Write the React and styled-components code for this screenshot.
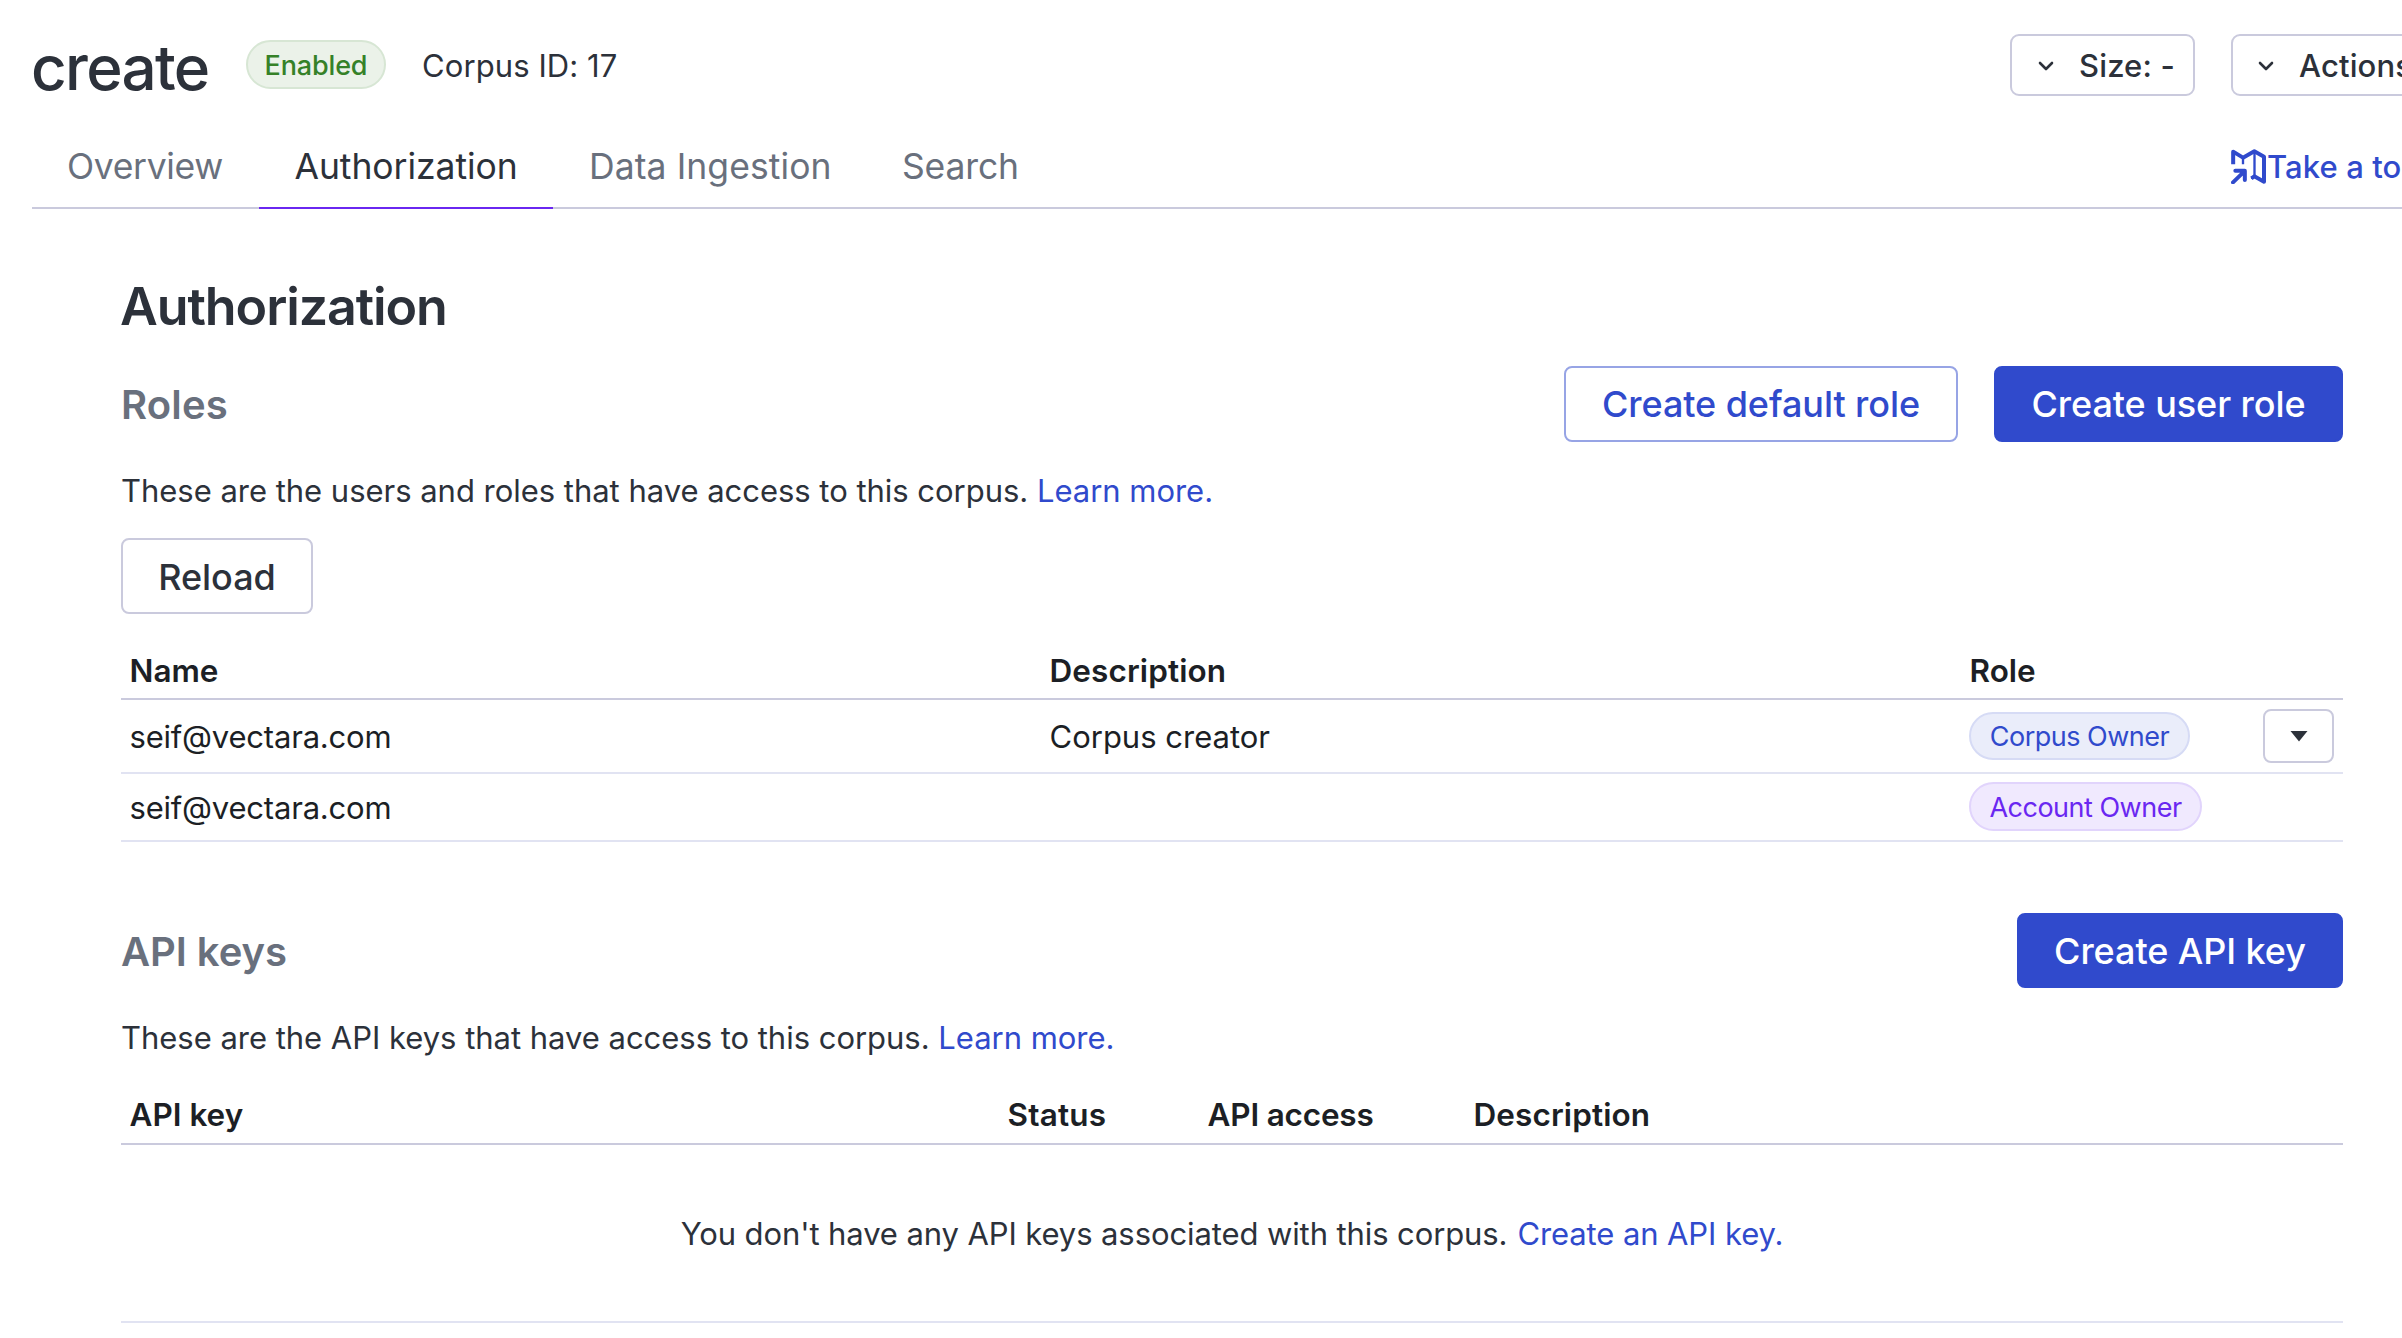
import React from 'react';
import styled, { createGlobalStyle, css } from 'styled-components';

const color = {
  text: '#2c313a',
  dark: '#1c1f25',
  subdued: '#69707d',
  primary: '#304acc',
  accent: '#6a27f1',
  success: '#358128',
  border: '#cacadd',
  rowLine: '#e1e3f2',
};

const GlobalStyle = createGlobalStyle`
  *, *::before, *::after { box-sizing: border-box; }
  html, body { margin: 0; padding: 0; background: #fff; overflow: hidden; }
  body {
    font-family: Inter, "Liberation Sans", sans-serif;
    font-size: 31px;
    font-weight: 420;
    color: ${color.text};
  }
  button { font-family: inherit; cursor: pointer; }
  svg { flex-shrink: 0; }
`;

const Viewport = styled.div`
  width: 100vw;
  height: 100vh;
  overflow: hidden;
  background: #fff;
`;

const Page = styled.main`
  width: 2464px;
  padding: 34px 32px 0;
`;

const Header = styled.header`
  display: flex;
  align-items: flex-start;
  height: 62px;
`;

const Title = styled.h1`
  width: 190px;
  margin: 0 24px 0 0;
  text-indent: -1px;
  font-size: 62px;
  font-weight: 460;
  line-height: 67px;
  letter-spacing: -1.7px;
  white-space: nowrap;
`;

const badgeTone = {
  success: css`
    color: ${color.success};
    background: #ebf2e9;
    border-color: #d7e6d4;
  `,
  primary: css`
    color: ${color.primary};
    background: #eaedfa;
    border-color: #d6dbf5;
  `,
  accent: css`
    color: ${color.accent};
    background: #f0e9fe;
    border-color: #e1d4fc;
  `,
};

const Badge = styled.span`
  display: flex;
  justify-content: center;
  width: ${(p) => p.$width}px;
  height: ${(p) => p.$height}px;
  border: 2px solid;
  border-radius: 25px;
  font-size: 27px;
  font-weight: ${(p) => p.$weight || 440};
  line-height: ${(p) => (p.$height % 2 ? p.$height - 2 : p.$height - 3)}px;
  letter-spacing: ${(p) => p.$tracking || 0}px;
  white-space: nowrap;
  ${(p) => badgeTone[p.$tone]}
`;

const StatusSlot = styled.div`
  padding-top: 6px;
`;

const CorpusId = styled.div`
  margin-left: 36px;
  line-height: 63px;
  letter-spacing: 0.09px;
`;

const HeaderActions = styled.div`
  display: flex;
  gap: 36px;
  margin-left: auto;
`;

const MenuButton = styled.button`
  display: flex;
  align-items: center;
  gap: 19px;
  width: ${(p) => p.$width}px;
  height: 62px;
  padding: 1px 0 0 ${(p) => p.$inset}px;
  border: 2px solid ${color.border};
  border-radius: 9px;
  background: #fff;
  color: ${color.text};
  font-size: 31px;
  font-weight: 500;
  letter-spacing: 0.15px;
  white-space: nowrap;
`;

const Tabs = styled.nav`
  display: flex;
  height: 84px;
  margin-top: 29px;
  border-bottom: 2px solid ${color.border};
`;

const Tab = styled.a`
  width: ${(p) => p.$width}px;
  height: 84px;
  padding-left: ${(p) => p.$inset || 36}px;
  border-bottom: 2px solid ${(p) => (p.$active ? color.accent : 'transparent')};
  color: ${(p) => (p.$active ? color.text : color.subdued)};
  font-size: 35.5px;
  line-height: 84px;
  letter-spacing: ${(p) => p.$tracking}px;
  white-space: nowrap;
`;

const TourLink = styled.a`
  display: flex;
  align-items: center;
  gap: 1px;
  width: 201px;
  height: 83px;
  margin-left: auto;
  color: ${color.primary};
  font-size: 31px;
  font-weight: 520;
  letter-spacing: 0.1px;
  white-space: nowrap;
`;

const Content = styled.div`
  width: 2222px;
  margin: 0 89px;
  padding-top: 65px;
`;

const PageTitle = styled.h2`
  margin: 0 0 26px;
  text-indent: -1px;
  font-size: 52px;
  font-weight: 620;
  line-height: 66px;
  letter-spacing: -1.1px;
`;

const SectionHead = styled.div`
  display: flex;
  align-items: center;
  justify-content: space-between;
  height: ${(p) => p.$height}px;
`;

const SectionTitle = styled.h3`
  margin: 0;
  padding-top: 2px;
  color: ${color.subdued};
  font-size: 40px;
  font-weight: 620;
  line-height: 48px;
  letter-spacing: ${(p) => p.$tracking || 0}px;
`;

const ButtonGroup = styled.div`
  display: flex;
  gap: 36px;
`;

const buttonKind = {
  filled: css`
    background: ${color.primary};
    border-color: ${color.primary};
    color: #fff;
  `,
  outline: css`
    background: #fff;
    border-color: #97a4e5;
    color: ${color.primary};
  `,
  neutral: css`
    padding-top: 2px;
    background: #fff;
    border-color: ${color.border};
    color: ${color.text};
  `,
};

const Button = styled.button`
  display: flex;
  align-items: center;
  justify-content: center;
  width: ${(p) => p.$width}px;
  height: ${(p) => p.$height || 76}px;
  padding: 0;
  border: 2px solid;
  border-radius: 8px;
  font-size: 36px;
  font-weight: 500;
  letter-spacing: -0.07px;
  white-space: nowrap;
  ${(p) => buttonKind[p.$kind]}
`;

const Paragraph = styled.p`
  margin: ${(p) => p.$before}px 0 ${(p) => p.$after}px;
  line-height: 48px;
  letter-spacing: -0.025px;
`;

const Link = styled.a`
  color: ${color.primary};
`;

const Table = styled.div`
  margin-top: ${(p) => p.$before || 0}px;
`;

const Row = styled.div`
  display: grid;
  grid-template-columns: ${(p) => p.$columns};
  align-items: center;
  height: ${(p) => p.$height}px;
  border-bottom: 2px solid ${color.rowLine};
  color: ${color.dark};
`;

const HeadRow = styled(Row)`
  border-bottom-color: ${color.border};
  font-size: 31.5px;
  font-weight: 620;
`;

const Cell = styled.div`
  padding: 0 8.5px;
  letter-spacing: ${(p) => p.$tracking || 0}px;
  white-space: nowrap;
`;

const RoleCell = styled(Cell)`
  display: flex;
  align-items: center;
  justify-content: space-between;
  padding-left: 8px;
  padding-right: 9px;
  padding-bottom: ${(p) => p.$lift || 0}px;
`;

const SelectButton = styled.button`
  display: flex;
  align-items: center;
  justify-content: center;
  width: 71px;
  height: 54px;
  padding: 0;
  border: 2px solid ${color.border};
  border-radius: 8px;
  background: #fff;
`;

const ApiSection = styled.section`
  margin-top: 71px;
`;

const EmptyState = styled.div`
  display: flex;
  align-items: center;
  justify-content: center;
  gap: 10px;
  height: 178px;
  padding-top: 1px;
  border-bottom: 2px solid ${color.rowLine};
  letter-spacing: -0.1px;
`;

const Chevron = () => (
  <svg width="28" height="28" viewBox="0 0 28 28" fill="none" stroke={color.text} strokeWidth="2.6" strokeLinecap="round" strokeLinejoin="round">
    <path d="M8 11l6 6 6-6" />
  </svg>
);

const MapArrow = () => (
  <svg width="35" height="35" viewBox="0 0 105 105" fill="none" stroke={color.primary} strokeLinejoin="round">
    <path d="M6.500 46V8L36 26L70 7L99 23V98L70 82L61 88" strokeWidth="12" />
    <path d="M36 24V46M70.500 8V82M63.500 84V90" strokeWidth="7" />
    <path d="M13 65.500H41.500V93M40 67L6 100" strokeWidth="12" strokeLinecap="round" />
  </svg>
);

const Caret = () => (
  <svg width="18" height="11" viewBox="0 0 18 11">
    <path d="M0.500 0H17.500L9 10.500Z" fill={color.text} />
  </svg>
);

const tabs = [
  { label: 'Overview', width: 227, inset: 35, tracking: -0.34 },
  { label: 'Authorization', width: 294, inset: 35.500, tracking: -0.06, active: true },
  { label: 'Data Ingestion', width: 312, tracking: 0.08 },
  { label: 'Search', width: 188, inset: 37, tracking: -0.16 },
];

const roles = [
  {
    name: 'seif@vectara.com',
    description: 'Corpus creator',
    height: 74,
    badge: { label: 'Corpus Owner', tone: 'primary', width: 221, height: 48 },
    menu: true,
  },
  {
    name: 'seif@vectara.com',
    description: '',
    height: 68,
    lift: 1,
    badge: { label: 'Account Owner', tone: 'accent', width: 233, height: 49 },
  },
];

const ROLE_COLUMNS = '920px 920px 1fr';
const KEY_COLUMNS = '878px 200px 266px 1fr';

export default function App() {
  return (
    <Viewport>
      <GlobalStyle />
      <Page>
        <Header>
          <Title>create</Title>
          <StatusSlot>
            <Badge $tone="success" $width={140} $height={49} $weight={500} $tracking={-0.15}>Enabled</Badge>
          </StatusSlot>
          <CorpusId>Corpus ID: 17</CorpusId>
          <HeaderActions>
            <MenuButton $width={185} $inset={20}><Chevron />Size: -</MenuButton>
            <MenuButton $width={201} $inset={19}><Chevron />Actions</MenuButton>
          </HeaderActions>
        </Header>

        <Tabs>
          {tabs.map((t) => (
            <Tab key={t.label} $width={t.width} $inset={t.inset} $tracking={t.tracking} $active={t.active}>{t.label}</Tab>
          ))}
          <TourLink><MapArrow />Take a tour</TourLink>
        </Tabs>

        <Content>
          <PageTitle>Authorization</PageTitle>

          <section>
            <SectionHead $height={76}>
              <SectionTitle $tracking={0.2}>Roles</SectionTitle>
              <ButtonGroup>
                <Button $kind="outline" $width={394}>Create default role</Button>
                <Button $kind="filled" $width={349}>Create user role</Button>
              </ButtonGroup>
            </SectionHead>
            <Paragraph $before={25} $after={23}>
              These are the users and roles that have access to this corpus. <Link>Learn more.</Link>
            </Paragraph>
            <Button $kind="neutral" $width={192}>Reload</Button>
            <Table $before={29}>
              <HeadRow $columns={ROLE_COLUMNS} $height={57}>
                <Cell>Name</Cell>
                <Cell $tracking={0.1}>Description</Cell>
                <Cell>Role</Cell>
              </HeadRow>
              {roles.map((r) => (
                <Row key={r.badge.label} $columns={ROLE_COLUMNS} $height={r.height}>
                  <Cell $tracking={-0.2}>{r.name}</Cell>
                  <Cell>{r.description}</Cell>
                  <RoleCell $lift={r.lift}>
                    <Badge $tone={r.badge.tone} $width={r.badge.width} $height={r.badge.height} $tracking={-0.5}>
                      {r.badge.label}
                    </Badge>
                    {r.menu && <SelectButton aria-label="Role actions"><Caret /></SelectButton>}
                  </RoleCell>
                </Row>
              ))}
            </Table>
          </section>

          <ApiSection>
            <SectionHead $height={75}>
              <SectionTitle $tracking={-0.05}>API keys</SectionTitle>
              <Button $kind="filled" $width={326} $height={75}>Create API key</Button>
            </SectionHead>
            <Paragraph $before={26} $after={23}>
              These are the API keys that have access to this corpus. <Link>Learn more.</Link>
            </Paragraph>
            <Table>
              <HeadRow $columns={KEY_COLUMNS} $height={60}>
                <Cell>API key</Cell>
                <Cell $tracking={0.2}>Status</Cell>
                <Cell $tracking={-0.18}>API access</Cell>
                <Cell $tracking={0.1}>Description</Cell>
              </HeadRow>
              <EmptyState>
                <span>You don't have any API keys associated with this corpus.</span>
                <Link>Create an API key.</Link>
              </EmptyState>
            </Table>
          </ApiSection>
        </Content>
      </Page>
    </Viewport>
  );
}
